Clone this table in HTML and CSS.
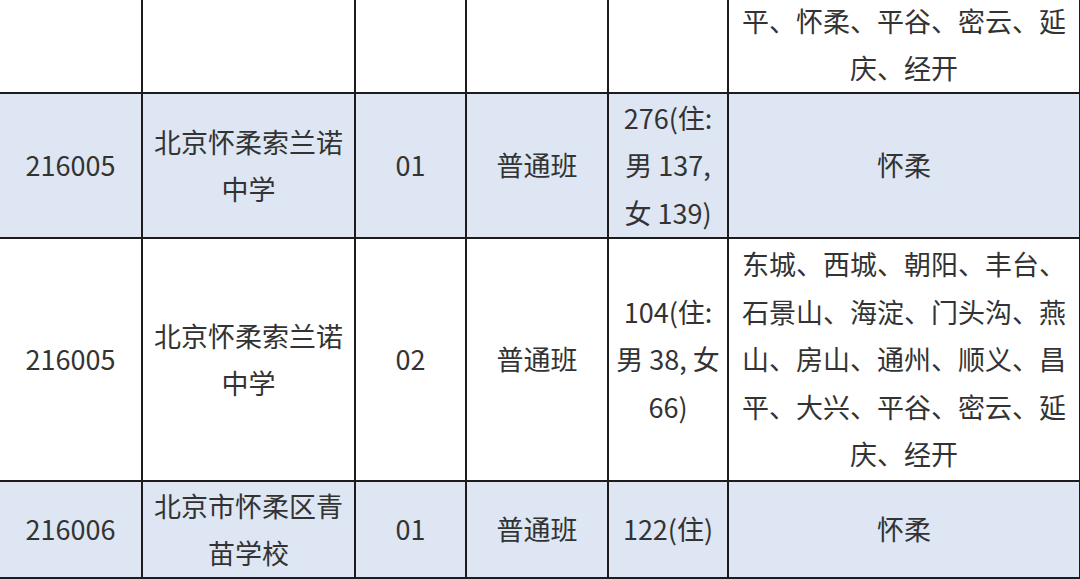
FILE: index.html
```html
<!DOCTYPE html>
<html lang="zh-CN">
<head>
<meta charset="utf-8">
<link rel="stylesheet" href="styles.css">
</head>
<body>
<div class="viewport">
<table class="plan">
  <colgroup>
    <col class="c-code">
    <col class="c-name">
    <col class="c-no">
    <col class="c-type">
    <col class="c-count">
    <col class="c-area">
  </colgroup>
  <tbody>
    <tr class="row-prev">
      <td></td>
      <td></td>
      <td></td>
      <td></td>
      <td></td>
      <td class="area">东城、西城、朝阳、丰台、石景山、海淀、门头沟、燕山、房山、通州、顺义、昌平、怀柔、平谷、密云、延庆、经开</td>
    </tr>
    <tr class="row-a shaded">
      <td>216005</td>
      <td class="name">北京怀柔索兰诺中学</td>
      <td>01</td>
      <td>普通班</td>
      <td class="count">276(住:男 137, 女 139)</td>
      <td class="area">怀柔</td>
    </tr>
    <tr class="row-b">
      <td>216005</td>
      <td class="name">北京怀柔索兰诺中学</td>
      <td>02</td>
      <td>普通班</td>
      <td class="count">104(住:男 38, 女 66)</td>
      <td class="area">东城、西城、朝阳、丰台、石景山、海淀、门头沟、燕山、房山、通州、顺义、昌平、大兴、平谷、密云、延庆、经开</td>
    </tr>
    <tr class="row-c shaded">
      <td>216006</td>
      <td class="name">北京市怀柔区青苗学校</td>
      <td>01</td>
      <td>普通班</td>
      <td class="count">122(住)</td>
      <td class="area">怀柔</td>
    </tr>
  </tbody>
</table>
</div>
</body>
</html>
```

FILE: styles.css
```css
html, body {
  margin: 0;
  padding: 0;
  background: #ffffff;
}

.viewport {
  width: 1080px;
  height: 579px;
  overflow: hidden;
}

.plan {
  border-collapse: collapse;
  table-layout: fixed;
  width: 1081px;
  margin-top: -148px;
  margin-left: -2px;
  font-family: "Noto Sans CJK SC", "Noto Sans", sans-serif;
  font-size: 27px;
  line-height: 47.5px;
  color: #333333;
}

.c-code { width: 143px; }
.c-name { width: 213px; }
.c-no { width: 111px; }
.c-type { width: 142px; }
.c-count { width: 120px; }
.c-area { width: 352px; }

.plan td {
  border: 2px solid #1c1c1c;
  padding: 0 4px;
  text-align: center;
  vertical-align: middle;
  word-break: normal;
  line-break: strict;
}

.plan .shaded td {
  background: #dde6f2;
}

.row-prev { height: 238px; }
.row-a { height: 145px; }
.row-b { height: 243px; }
.row-c { height: 96px; }
```
